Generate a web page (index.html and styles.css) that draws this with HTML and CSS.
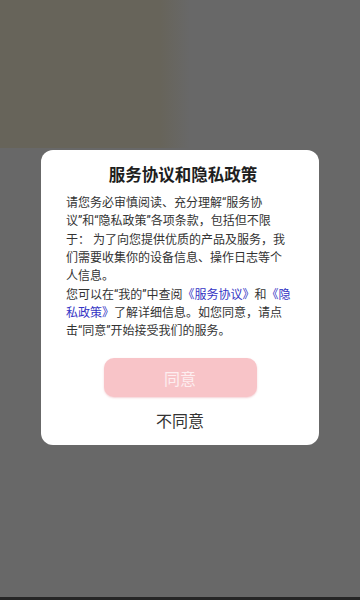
FILE: index.html
```html
<!DOCTYPE html>
<html lang="zh-CN">
<head>
<meta charset="utf-8">
<meta name="viewport" content="width=360, initial-scale=1">
<title>服务协议和隐私政策</title>
<link rel="stylesheet" href="styles.css">
</head>
<body>
<div class="screen">
  <div class="dialog">
    <h1 class="dialog-title">服务协议和隐私政策</h1>
    <div class="dialog-body">
      <p class="para">请您务必审慎阅读、充分理解“服务协<br>议”和“隐私政策”各项条款，包括但不限<br>于： 为了向您提供优质的产品及服务，我<br>们需要收集你的设备信息、操作日志等个<br>人信息。</p>
      <p class="para">您可以在“我的”中查阅<span class="link">《服务协议》</span>和<span class="link">《隐<br>私政策》</span>了解详细信息。如您同意，请点<br>击“同意”开始接受我们的服务。</p>
    </div>
    <button class="btn-agree" type="button">同意</button>
    <button class="btn-disagree" type="button">不同意</button>
  </div>
</div>
</body>
</html>
```
FILE: styles.css
```css
html, body {
  margin: 0;
  padding: 0;
}
body {
  width: 360px;
  height: 600px;
  overflow: hidden;
  font-family: Roboto, "Noto Sans CJK SC", sans-serif;
  background-color: #686868;
  background-image:
    linear-gradient(#262626, #262626),
    linear-gradient(to right, #67645a 0, #67645a 160px, rgba(104,104,104,0) 190px);
  background-repeat: no-repeat;
  background-size: 100% 3px, 100% 148px;
  background-position: 0 597px, 0 0;
}
.screen {
  display: flex;
  flex-direction: column;
  align-items: center;
  padding-top: 150px;
}
.dialog {
  width: 278px;
  box-sizing: border-box;
  background: #ffffff;
  border-radius: 12px;
  padding: 14.5px 22px 12px 25px;
  display: flex;
  flex-direction: column;
  align-items: center;
}
.dialog-title {
  margin: 0;
  font-size: 16.5px;
  line-height: 22px;
  font-weight: 700;
  color: #1e1e1e;
  text-align: center;
  align-self: stretch;
  margin-right: -3px;
}
.dialog-body {
  margin-top: 7.6px;
  align-self: stretch;
  font-size: 12px;
  line-height: 18.3px;
  color: #333333;
  white-space: nowrap;
}
.para {
  margin: 0;
  text-align: left;
}
.link {
  color: #3434c4;
}
.btn-agree {
  margin-top: 18px;
  margin-left: -3px;
  width: 153px;
  height: 39px;
  border: none;
  border-radius: 10px;
  background: #f8c4c8;
  box-shadow: 0 1px 2px rgba(230, 150, 160, 0.45);
  color: #fdeef0;
  font-family: Roboto, "Noto Sans CJK SC", sans-serif;
  font-size: 16px;
  padding: 0;
}
.btn-disagree {
  margin-top: 14px;
  margin-left: -3px;
  border: none;
  background: none;
  padding: 0;
  font-family: Roboto, "Noto Sans CJK SC", sans-serif;
  font-size: 16px;
  line-height: 22px;
  color: #333333;
}
```
